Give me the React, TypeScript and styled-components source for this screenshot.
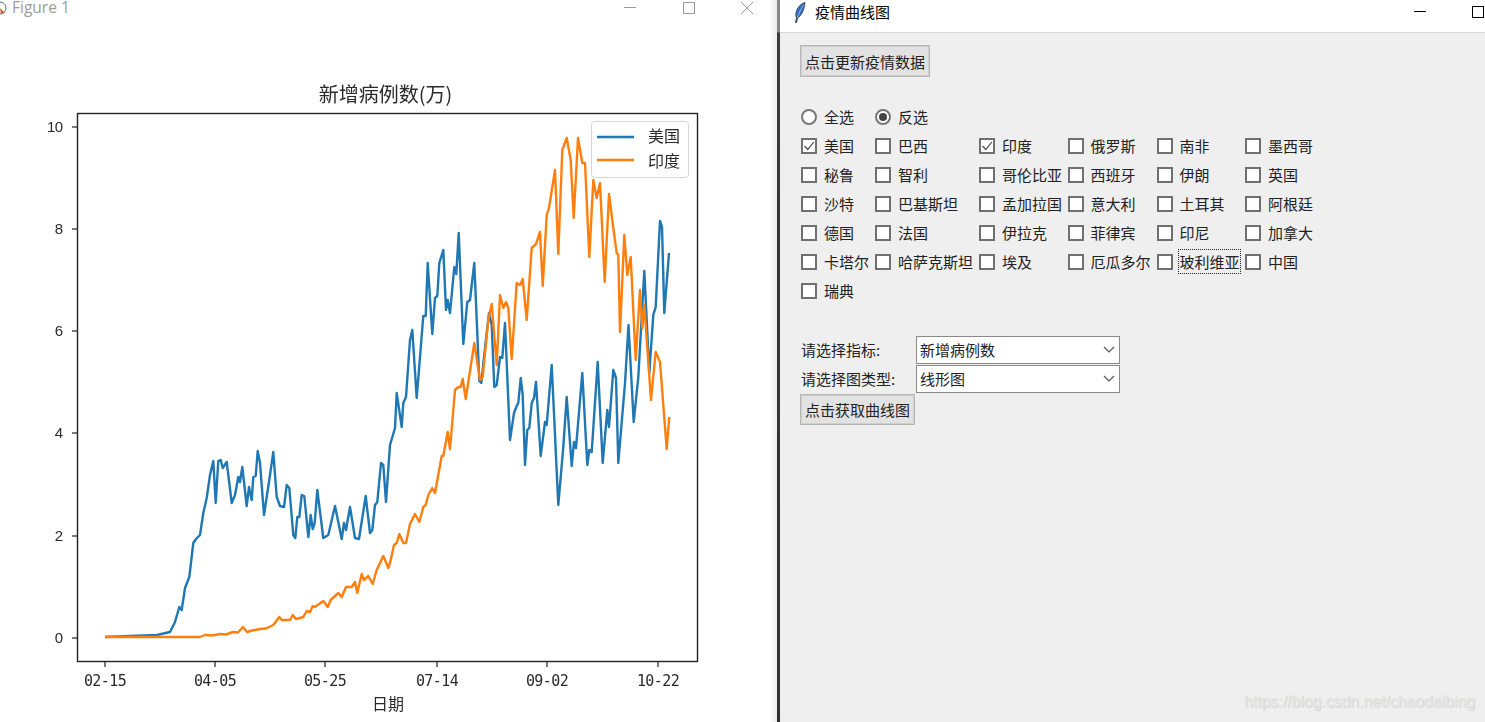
import styled, { createGlobalStyle } from "styled-components";

const CJK = `"Noto Sans CJK SC", "Liberation Sans", sans-serif`;

const GlobalStyle = createGlobalStyle`
  html, body {
    margin: 0;
    padding: 0;
    background: #fff;
    overflow: hidden;
  }
  * {
    box-sizing: border-box;
  }
`;

const Page = styled.div`
  display: flex;
  width: 1485px;
  height: 722px;
  overflow: hidden;
  font-family: ${CJK};
`;

/* ---------- left window: the matplotlib figure ---------- */

const FigureWindow = styled.div`
  display: flex;
  flex-direction: column;
  width: 777px;
  height: 100%;
  background: linear-gradient(to right, #fff 0, #fff 769px, #ececec 777px);
`;

const FigureTitleBar = styled.div`
  display: flex;
  align-items: center;
  height: 15px;
  flex: none;
  position: relative;
`;

const FigureTitle = styled.span`
  margin-left: 12px;
  font-family: "Open Sans", sans-serif;
  font-size: 15.5px;
  line-height: 15px;
  color: #9c9c9c;
`;

const FigureControls = styled.div`
  display: flex;
  align-items: center;
  gap: 46.5px;
  margin-left: auto;
  margin-right: 24px;
`;

const ChartSvg = styled.svg`
  display: block;
  flex: none;
  filter: blur(0.35px);
`;

const Divider = styled.div`
  width: 3px;
  height: 100%;
  flex: none;
  background: linear-gradient(to bottom, #8a8a8a 0, #8a8a8a 32px, #3a3a3a 33px, #2e2e2e 100%);
`;

/* ---------- right window: the tk form ---------- */

const TkWindow = styled.div`
  display: flex;
  flex-direction: column;
  flex: 1;
  height: 100%;
  position: relative;
  background: #efefef;
`;

const TkTitleBar = styled.div`
  display: flex;
  align-items: center;
  height: 33px;
  flex: none;
  padding: 0 0 8px 14px;
  background: #fff;
  border-bottom: 1px solid #d9d9d9;
`;

const TkTitle = styled.span`
  margin-left: 9px;
  font-size: 15px;
  line-height: 20px;
  color: #000;
`;

const TkControls = styled.div`
  display: flex;
  align-items: center;
  gap: 46px;
  margin-left: auto;
  margin-right: 1px;
`;

const Content = styled.div`
  display: flex;
  flex-direction: column;
  align-items: flex-start;
  padding: 12px 0 0 20px;
`;

const TkButton = styled.div<{ $height: number }>`
  display: flex;
  align-items: center;
  height: ${p => p.$height}px;
  padding: 0 4px;
  background: #e2e2e2;
  border: 1px solid #b6b6b6;
  outline: 1px solid #cfcfcf;
  outline-offset: -2px;
  font-size: 15px;
  color: #222;
  white-space: nowrap;
`;

const OptionGrid = styled.div`
  display: grid;
  grid-template-columns: 74px 104px 88.5px 89px 88.5px auto;
  grid-auto-rows: 29px;
  margin: 25px 0 0 1px;
`;

const Option = styled.div`
  display: flex;
  align-items: center;
  gap: 7px;
  font-size: 15px;
  color: #222;
  white-space: nowrap;
`;

const OptionLabel = styled.span<{ $focused?: boolean }>`
  position: relative;
  line-height: 20px;
  &::after {
    content: "";
    display: ${p => (p.$focused ? "block" : "none")};
    position: absolute;
    inset: -3px -1px -2px -2px;
    border: 1px dotted #222;
  }
`;

const CheckBox = styled.span`
  display: flex;
  align-items: center;
  justify-content: center;
  width: 16px;
  height: 16px;
  flex: none;
  background: #fff;
  border: 2px solid #707070;
`;

const RadioCircle = styled.span<{ $on?: boolean }>`
  display: flex;
  align-items: center;
  justify-content: center;
  width: 16px;
  height: 16px;
  flex: none;
  background: #fff;
  border: 2px solid #777;
  border-radius: 50%;
  &::after {
    content: "";
    display: ${p => (p.$on ? "block" : "none")};
    width: 8px;
    height: 8px;
    border-radius: 50%;
    background: #444;
  }
`;

const FormRows = styled.div`
  display: grid;
  grid-template-columns: 115px 204px;
  grid-auto-rows: 29px;
  margin: 31px 0 0 1px;
`;

const FieldLabel = styled.div`
  display: flex;
  align-items: center;
  padding-bottom: 2px;
  font-size: 15px;
  color: #222;
`;

const ComboBox = styled.div`
  display: flex;
  align-items: center;
  justify-content: space-between;
  height: 28px;
  padding: 0 4px 2px 3px;
  background: #fff;
  border: 1.5px solid #8a8a8a;
  font-size: 15px;
  color: #222;
`;

const Watermark = styled.div`
  position: absolute;
  left: 464px;
  top: 692px;
  font-family: "Liberation Sans", sans-serif;
  font-size: 15.8px;
  line-height: 20px;
  color: #e4e4e4;
  text-shadow: 1px 1px 1px #d4d4d4;
`;

/* traced from the plot, in page pixels */
const usPoints = [
  [105, 637], [157, 635], [170, 632], [175, 622], [179.3, 607], [181.7, 610], [185, 588], [189.3, 577],
  [193.3, 543], [196, 539], [200, 535], [203.3, 513], [206.7, 498], [210, 475], [213.3, 461], [215.7, 503],
  [218.3, 461], [220.7, 460], [222.7, 468], [226.7, 462], [231.7, 503], [235, 495], [238.3, 477], [240, 482],
  [242.3, 467], [246.7, 506], [249, 487], [251.7, 500], [253.3, 477], [255.7, 476], [257.7, 451], [260, 463],
  [264, 515], [270, 475], [273.3, 452], [276.7, 497], [280, 506], [284, 507], [286.7, 485], [289.3, 488],
  [293.3, 535], [295.3, 538], [297.3, 517], [299.3, 517], [301.7, 495], [304.3, 496], [308.3, 537], [310.7, 515],
  [312.7, 529], [314.7, 523], [317.3, 490], [323.3, 538], [328.3, 535], [335, 506], [341.7, 539], [344, 523],
  [346, 530], [350, 507], [355, 538], [359, 539], [365.7, 496], [370, 533], [372.3, 530], [375, 505],
  [377.3, 502], [381, 463], [383.3, 465], [386, 502], [390, 445], [395, 428], [396.7, 393], [401.7, 427],
  [403.3, 403], [406, 397], [410, 340], [412.3, 330], [416.7, 398], [423.3, 316], [425.7, 316], [427.7, 263],
  [432.3, 334], [435, 298], [437.3, 296], [439.3, 263], [443.3, 250], [446, 310], [447.7, 300], [450, 313],
  [454.3, 267], [456.3, 274], [458.7, 233], [463.3, 344], [467.3, 302], [470, 300], [474.3, 263], [479.3, 381],
  [481.3, 383], [484, 357], [489, 313], [491.7, 325], [494.3, 387], [496.7, 385], [500, 357], [502.3, 358],
  [505, 323], [510, 440], [514, 413], [516.7, 406], [518.3, 403], [520.7, 378], [522.7, 395], [525, 465],
  [527.3, 430], [529.3, 428], [531.7, 403], [534, 398], [536, 382], [540.7, 456], [545, 422], [546.7, 425],
  [551.7, 365], [558.3, 505], [563.3, 447], [566.7, 397], [571.7, 466], [574, 442], [576, 448], [582.3, 373],
  [587.3, 465], [589.3, 450], [591.7, 452], [597.7, 362], [602.7, 463], [607.3, 410], [609, 427], [613.3, 370],
  [616, 378], [618.3, 463], [625, 383], [628.5, 325], [633.7, 422], [638.3, 377], [644.3, 271], [649.3, 373],
  [653.3, 315], [655.7, 307], [660, 221], [662, 227], [664.3, 313], [669, 253],
];

const indiaPoints = [
  [105, 637], [200, 637], [205, 635], [212, 635.5], [220, 634], [226, 634.5], [233, 632], [238, 632.5], [243, 627], [247, 632],
  [252, 630.5], [260, 629], [266, 628.5], [273.3, 625], [279.3, 617], [281.7, 620], [290, 620], [292.7, 615], [296, 619],
  [303.3, 617], [306.7, 611], [310, 612], [312.7, 606], [315, 607], [323.3, 601], [327.7, 607], [330.7, 600],
  [338.3, 593], [341.7, 597], [346, 587], [351.7, 587], [355, 582], [357.3, 593], [361.7, 574], [364, 580],
  [368.3, 576], [372.7, 584], [376.7, 570], [383.3, 556], [388.3, 568], [390, 563], [394, 545], [396.7, 543],
  [399.3, 534], [403.3, 543], [406, 543], [410, 524], [415, 514], [419.3, 522], [423.3, 507], [425.7, 505],
  [428.3, 495], [432.3, 488], [435, 493], [441.7, 456], [443.3, 456], [447.7, 432], [450, 449], [455, 390],
  [458.3, 387], [460.7, 387], [462.7, 379], [465.7, 399], [474.3, 343], [480, 380], [482.7, 377], [488.3, 320],
  [491.7, 304], [496.7, 365], [500, 295], [503.3, 308], [506, 302], [508.3, 308], [511.7, 359], [516.7, 283],
  [520, 285], [522.7, 279], [526.7, 320], [531.7, 248], [536, 244], [540, 232], [542.7, 286], [546.7, 215],
  [549, 208], [555, 170], [558.3, 254], [562.3, 150], [566.7, 138], [570.7, 160], [573.7, 218], [578, 138],
  [582.3, 163], [585, 163], [589.3, 257], [593.3, 180], [596.7, 198], [600, 183], [604.7, 282], [609, 194],
  [613.3, 228], [616.7, 253], [618.3, 255], [620, 332], [624.3, 235], [627.3, 275], [630.7, 257], [635.7, 360],
  [640, 290], [642.3, 328], [644.3, 305], [651, 400], [655.7, 352], [660, 362], [666.7, 449], [669.3, 417],
];

const toPolyline = (points: number[][]) => points.map(p => p.join(",")).join(" ");

const yTicks = [
  { label: "10", y: 127 },
  { label: "8", y: 229 },
  { label: "6", y: 331 },
  { label: "4", y: 433 },
  { label: "2", y: 536 },
  { label: "0", y: 638 },
];

const xTicks = [
  { label: "02-15", x: 105 },
  { label: "04-05", x: 215 },
  { label: "05-25", x: 325 },
  { label: "07-14", x: 437 },
  { label: "09-02", x: 547 },
  { label: "10-22", x: 658 },
];

const Chart = () => (
  <ChartSvg width={777} height={707} viewBox="0 15 777 707">
    <text x={385.5} y={102} textAnchor="middle" fontFamily={CJK} fontSize={20} fill="#2a2a2a">
      新增病例数(万)
    </text>
    {yTicks.map(t => (
      <g key={t.label}>
        <line x1={72} x2={77} y1={t.y} y2={t.y} stroke="#222" strokeWidth={1.2} />
        <text x={62.5} y={t.y + 5} textAnchor="end" fontFamily='"Liberation Sans", sans-serif' fontSize={15} letterSpacing={-0.6} fill="#2a2a2a">
          {t.label}
        </text>
      </g>
    ))}
    {xTicks.map(t => (
      <g key={t.label}>
        <line x1={t.x} x2={t.x} y1={662} y2={667} stroke="#222" strokeWidth={1.2} />
        <text x={t.x} y={686} textAnchor="middle" fontFamily='"DejaVu Sans Mono", monospace' fontSize={15} letterSpacing={-0.6} fill="#2a2a2a">
          {t.label}
        </text>
      </g>
    ))}
    <text x={388} y={710} textAnchor="middle" fontFamily={CJK} fontSize={16} fill="#2a2a2a">
      日期
    </text>
    <polyline points={toPolyline(usPoints)} fill="none" stroke="#1f77b4" strokeWidth={2.4} strokeLinejoin="round" />
    <polyline points={toPolyline(indiaPoints)} fill="none" stroke="#ff7f0e" strokeWidth={2.4} strokeLinejoin="round" />
    <rect x={77.5} y={113.5} width={620} height={548} fill="none" stroke="#222" strokeWidth={1.4} />
    <rect x={591.5} y={121.5} width={97} height={56} rx={3} fill="#fff" fillOpacity={0.85} stroke="#d4d4d4" />
    <line x1={597} x2={634} y1={137} y2={137} stroke="#1f77b4" strokeWidth={2.4} />
    <line x1={597} x2={634} y1={160} y2={160} stroke="#ff7f0e" strokeWidth={2.4} />
    <text x={648} y={142} fontFamily={CJK} fontSize={16} fill="#2a2a2a">
      美国
    </text>
    <text x={648} y={167} fontFamily={CJK} fontSize={16} fill="#2a2a2a">
      印度
    </text>
  </ChartSvg>
);

const MplIcon = () => (
  <svg width={8} height={16} viewBox="0 0 8 16" style={{ position: "absolute", left: 0, top: 0 }}>
    <circle cx={0} cy={8} r={6} fill="#fff" stroke="#4a6f8a" strokeWidth={1} />
    <path d="M0 8 L5 13 L1 14 Z" fill="#c8602a" />
  </svg>
);

const Feather = () => (
  <svg width={12} height={21} viewBox="0 0 12 21">
    <path d="M11 0.5 C6 2 3 6 2 11 C1.6 13 2 15 2.6 16 L1.4 20.5 L2.6 20.5 L3.6 16 C7 14 10 9 11 0.5 Z" fill="#2f6fc4" stroke="#27313f" strokeWidth={0.8} />
    <path d="M9.5 3 C7 7 5 11 3.4 15.5" fill="none" stroke="#a9c8ee" strokeWidth={0.8} />
  </svg>
);

const ControlGlyph = ({ kind, color }: { kind: "min" | "max" | "close"; color: string }) => (
  <svg width={12} height={12} viewBox="0 0 12 12">
    {kind === "min" && <line x1={0} x2={12} y1={5.5} y2={5.5} stroke={color} />}
    {kind === "max" && <rect x={0.5} y={0.5} width={11} height={11} fill="none" stroke={color} />}
    {kind === "close" && <path d="M0 0 L12 12 M12 0 L0 12" stroke={color} fill="none" />}
  </svg>
);

const countryRows = [
  ["美国", "巴西", "印度", "俄罗斯", "南非", "墨西哥"],
  ["秘鲁", "智利", "哥伦比亚", "西班牙", "伊朗", "英国"],
  ["沙特", "巴基斯坦", "孟加拉国", "意大利", "土耳其", "阿根廷"],
  ["德国", "法国", "伊拉克", "菲律宾", "印尼", "加拿大"],
  ["卡塔尔", "哈萨克斯坦", "埃及", "厄瓜多尔", "玻利维亚", "中国"],
  ["瑞典"],
];
const checked = ["美国", "印度"];

const Chevron = () => (
  <svg width={12} height={7} viewBox="0 0 12 7">
    <path d="M1 1 L6 6 L11 1" fill="none" stroke="#555" strokeWidth={1.2} />
  </svg>
);

const App = () => (
  <>
    <GlobalStyle />
    <Page>
      <FigureWindow>
        <FigureTitleBar>
          <MplIcon />
          <FigureTitle>Figure 1</FigureTitle>
          <FigureControls>
            <ControlGlyph kind="min" color="#999" />
            <ControlGlyph kind="max" color="#999" />
            <ControlGlyph kind="close" color="#999" />
          </FigureControls>
        </FigureTitleBar>
        <Chart />
      </FigureWindow>
      <Divider />
      <TkWindow>
        <TkTitleBar>
          <Feather />
          <TkTitle>疫情曲线图</TkTitle>
          <TkControls>
            <ControlGlyph kind="min" color="#000" />
            <ControlGlyph kind="max" color="#000" />
          </TkControls>
        </TkTitleBar>
        <Content>
          <TkButton $height={32}>点击更新疫情数据</TkButton>
          <OptionGrid>
            <Option>
              <RadioCircle />
              <OptionLabel>全选</OptionLabel>
            </Option>
            <Option>
              <RadioCircle $on />
              <OptionLabel>反选</OptionLabel>
            </Option>
            <span />
            <span />
            <span />
            <span />
            {countryRows.flat().map(name => (
              <Option key={name}>
                <CheckBox>
                  {checked.includes(name) && (
                    <svg width={12} height={12} viewBox="0 0 12 12">
                      <path d="M1.5 6 L4.8 9.5 L10.8 2" fill="none" stroke="#444" strokeWidth={1.2} />
                    </svg>
                  )}
                </CheckBox>
                <OptionLabel $focused={name === "玻利维亚"}>{name}</OptionLabel>
              </Option>
            ))}
          </OptionGrid>
          <FormRows>
            <FieldLabel>请选择指标:</FieldLabel>
            <ComboBox>
              新增病例数
              <Chevron />
            </ComboBox>
            <FieldLabel>请选择图类型:</FieldLabel>
            <ComboBox>
              线形图
              <Chevron />
            </ComboBox>
          </FormRows>
          <TkButton $height={31}>点击获取曲线图</TkButton>
        </Content>
        <Watermark>https://blog.csdn.net/chaodaibing</Watermark>
      </TkWindow>
    </Page>
  </>
);

export default App;
